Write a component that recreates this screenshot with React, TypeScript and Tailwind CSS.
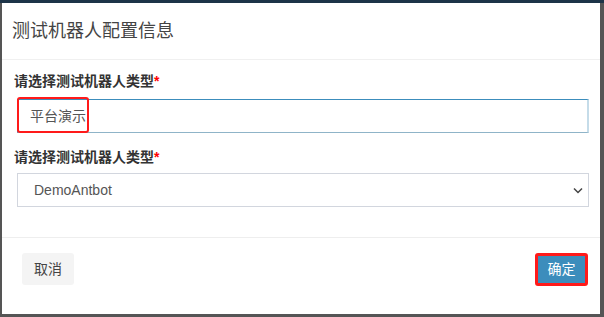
import React from 'react';

const font = { fontFamily: '"Liberation Sans", "Noto Sans CJK SC", sans-serif' };

function Label({ text }: { text: string }) {
  return (
    <div className="h-[20px] leading-[20px] text-[14px] font-bold text-[#333]">
      {text}
      <span className="text-[#ff0000]">*</span>
    </div>
  );
}

export default function App() {
  return (
    <div className="w-[604px] h-[317px] bg-[#555] border-t-[3px] border-[#1d3448] overflow-hidden" style={font}>
      <div className="ml-[2px] w-[598px] h-[311px] bg-white flex flex-col">
        {/* header */}
        <div className="h-[57px] border-b border-[#f0f0f0] flex items-center pl-[10px]">
          <h4 className="text-[18px] text-[#444] tracking-[0px]">测试机器人配置信息</h4>
        </div>

        {/* body */}
        <div className="h-[178px] border-b border-[#eeeeee] pl-[12px] pr-[11px] pt-[11px]">
          <Label text="请选择测试机器人类型" />
          <div className="relative mt-[8px] ml-[3px] h-[34px] border border-[#3c8dbc] border-b-[#8fb4c8] border-r-[#c5dce9] border-r-2 flex items-center pl-[12px] text-[14px] text-[#555]">
            平台演示
            <div className="absolute left-[-1px] top-[-3px] w-[72px] h-[36px] border-2 border-[#ff1a1a] rounded-[3px]" />
          </div>

          <div className="mt-[14px]">
            <Label text="请选择测试机器人类型" />
          </div>
          <div className="mt-[6px] ml-[3px] h-[34px] border border-[#d2d6de] flex items-center justify-between pl-[16px] pr-[5px] text-[14px] text-[#555]">
            <span>DemoAntbot</span>
            <svg width="10" height="7" viewBox="0 0 10 7" className="mr-[0px]">
              <path d="M1 1.5 L5 5.5 L9 1.5" fill="none" stroke="#444" strokeWidth="1.5" />
            </svg>
          </div>
        </div>

        {/* footer */}
        <div className="flex items-start justify-between pl-[20px] pr-[12px] pt-[15px]">
          <button className="h-[32px] w-[52px] bg-[#f4f4f4] rounded-[3px] text-[14px] text-[#444] flex items-center justify-center">
            取消
          </button>
          <div className="w-[53px] h-[33px] border-[3px] border-[#ff1a1a] rounded-[3px] bg-[#3c8dbc] flex items-center justify-center text-[14px] text-white">
            确定
          </div>
        </div>
      </div>
    </div>
  );
}
